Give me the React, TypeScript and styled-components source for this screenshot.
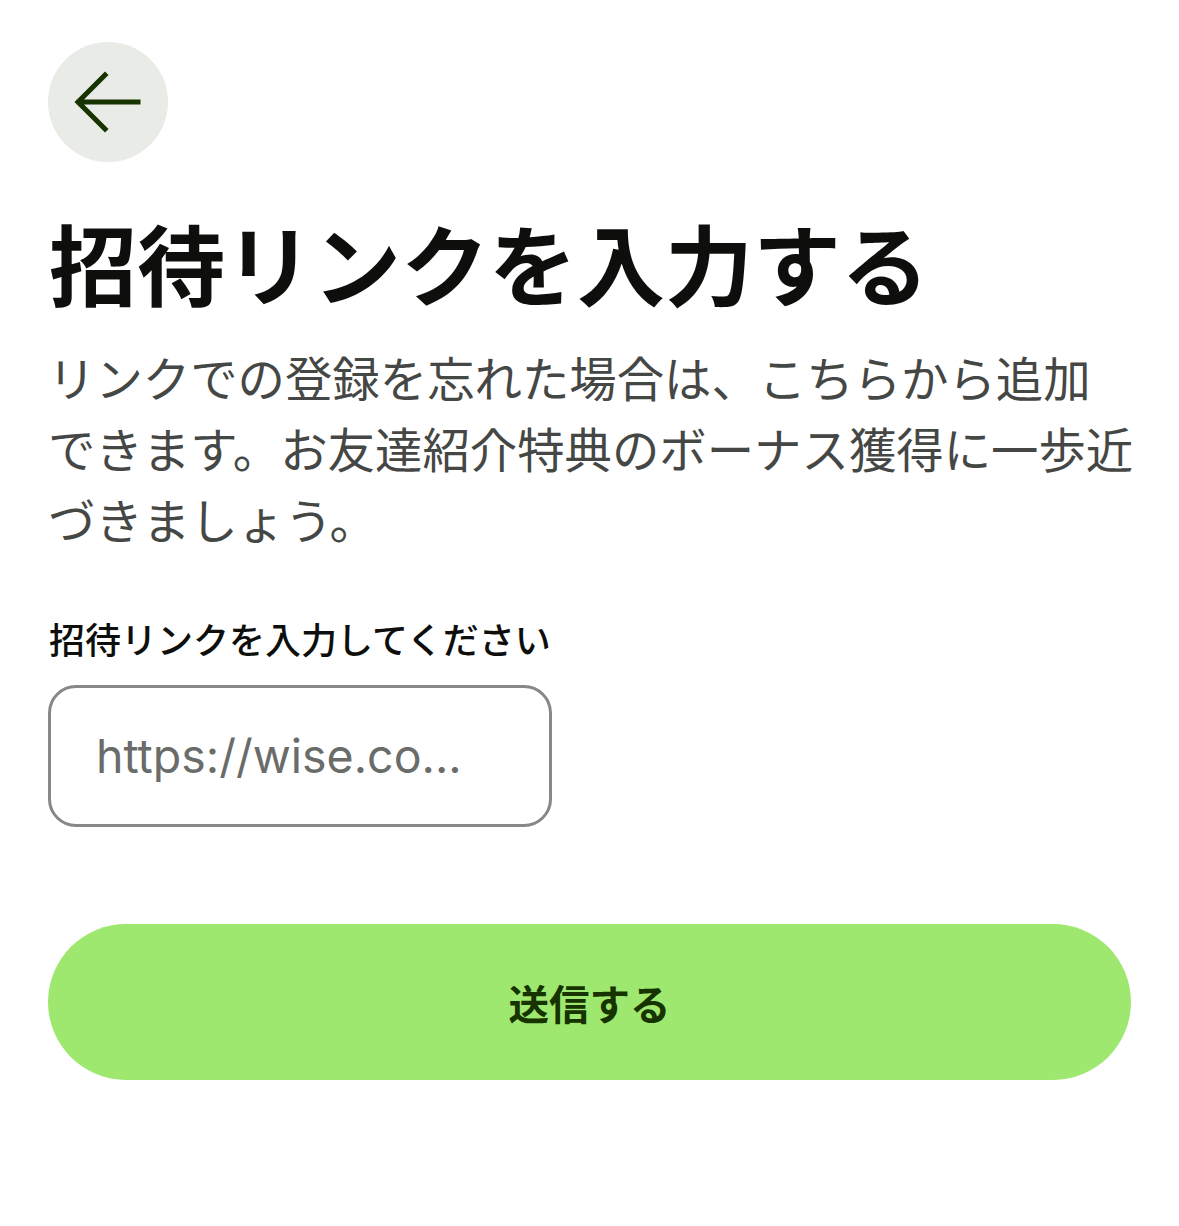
import React from "react";
import styled, { createGlobalStyle } from "styled-components";

const GlobalStyle = createGlobalStyle`
  html, body {
    margin: 0;
    padding: 0;
    background: #ffffff;
  }
  body {
    font-family: "Noto Sans CJK JP", "Noto Sans", sans-serif;
    color: #0e0f0c;
  }
`;

const Page = styled.main`
  display: flex;
  flex-direction: column;
  padding: 42px 48px 60px;
  box-sizing: border-box;
  width: 1179px;
`;

const BackButton = styled.button`
  display: flex;
  align-items: center;
  justify-content: center;
  width: 120px;
  height: 120px;
  padding: 0;
  border: none;
  border-radius: 50%;
  background: #e8ebe6;
  cursor: pointer;
`;

const Title = styled.h1`
  margin: 47px 0 0 1px;
  font-size: 88px;
  line-height: 104px;
  font-weight: 700;
  letter-spacing: 0;
  color: #0e0f0c;
`;

const Description = styled.p`
  margin: 28px 0 0 0;
  font-size: 47.4px;
  line-height: 71px;
  font-weight: 400;
  white-space: nowrap;
  color: #454745;
`;

const Field = styled.label`
  display: flex;
  flex-direction: column;
  gap: 23px;
  margin-top: 60px;
`;

const FieldLabel = styled.span`
  font-size: 36px;
  line-height: 48px;
  font-weight: 500;
  color: #0e0f0c;
  padding-left: 1px;
`;

const LinkInput = styled.input`
  box-sizing: border-box;
  width: 504px;
  height: 142px;
  padding: 0 30px 0 45px;
  border: 3px solid #878786;
  border-radius: 28px;
  background: #ffffff;
  font-family: Inter, "Liberation Sans", sans-serif;
  font-size: 46.5px;
  color: #0e0f0c;
  outline: none;

  &::placeholder {
    color: #6a6c6a;
  }
`;

const SubmitButton = styled.button`
  margin-top: 97px;
  width: 100%;
  height: 156px;
  border: none;
  border-radius: 78px;
  background: #9fe870;
  font-family: "Noto Sans CJK JP", "Noto Sans", sans-serif;
  font-size: 40.5px;
  font-weight: 700;
  color: #163300;
  cursor: pointer;
`;

function BackArrow() {
  return (
    <svg width="120" height="120" viewBox="0 0 120 120" fill="none">
      <path
        d="M90 60H31M57 33L30 60L57 87"
        stroke="#163300"
        strokeWidth="5"
        strokeLinecap="square"
        strokeLinejoin="miter"
      />
    </svg>
  );
}

export default function App() {
  return (
    <>
      <GlobalStyle />
      <Page>
        <BackButton aria-label="戻る">
          <BackArrow />
        </BackButton>
        <Title>招待リンクを入力する</Title>
        <Description>
          リンクでの登録を忘れた場合は、こちらから追加
          <br />
          できます。お友達紹介特典のボーナス獲得に一歩近
          <br />
          づきましょう。
        </Description>
        <Field>
          <FieldLabel>招待リンクを入力してください</FieldLabel>
          <LinkInput type="url" placeholder="https://wise.co..." />
        </Field>
        <SubmitButton>送信する</SubmitButton>
      </Page>
    </>
  );
}
